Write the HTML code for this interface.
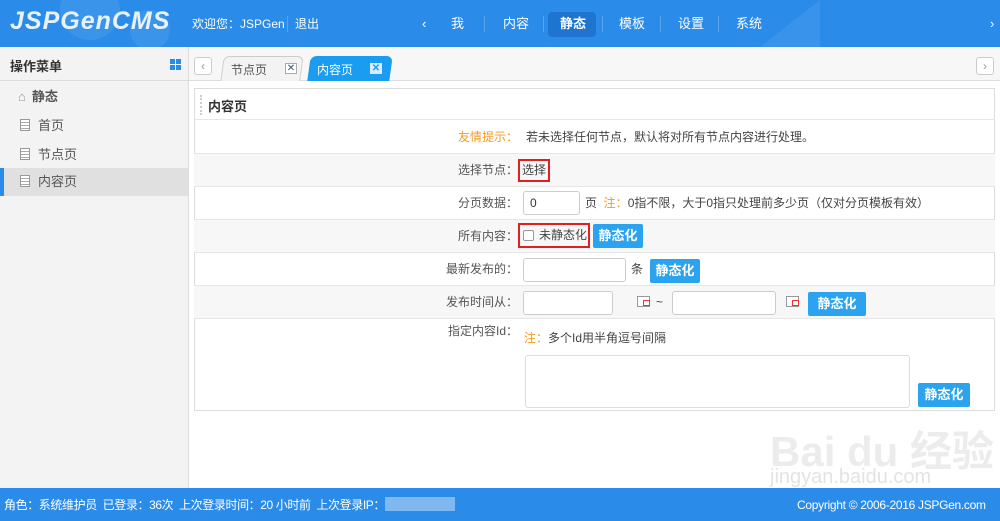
<!DOCTYPE html><html><head><meta charset="utf-8"><style>
*{margin:0;padding:0;box-sizing:border-box}
body{width:1000px;height:521px;position:relative;overflow:hidden;background:#fff;font-family:"Liberation Sans","Noto Sans CJK SC",sans-serif;font-size:12px;color:#444}
.a{position:absolute}
#hd{left:0;top:0;width:1000px;height:47px;background:#2a8be9;color:#fff;overflow:hidden}
.logo{left:10px;top:7px;font-size:25px;font-weight:bold;font-style:italic;color:#e8f2fb;letter-spacing:1px}
.nav{top:15px;font-size:13px;color:#fff;line-height:18px}
.sep{top:16px;width:1px;height:16px;background:#5aa4ee}
#sb{left:0;top:47px;width:189px;height:441px;background:#f3f3f3;border-right:1px solid #ddd}
.mi{left:0;width:188px;height:28px;line-height:28px;font-size:13px;color:#555}
.doc{display:inline-block;width:10px;height:12px;border:1px solid #999;margin:0 8px 0 20px;vertical-align:-1px;background:repeating-linear-gradient(#fff 0 2px,#aaa 2px 3px)}
#tb{left:189px;top:47px;width:811px;height:34px;background:#f7f7f7;border-bottom:1px solid #ddd}
.btn{background:#2ba3ee;color:#fff;font-size:13px;font-weight:bold;height:24px;line-height:24px;text-align:center;width:50px;border-radius:2px}
.in{background:#fff;border:1px solid #ccc;border-radius:3px;height:24px}
.row{left:194px;width:801px;border-top:1px solid #e6e6e6}
.lab{width:324px;text-align:right;font-size:12px;color:#555;line-height:16px}
.cal{width:13px;height:11px;border:1px solid #999;background:#fff}
.cal:after{content:"";position:absolute;left:5px;top:3px;width:5px;height:4px;border:1px solid #e33}
.or{color:#f39c20}
.t{line-height:16px}
</style></head><body>
<div id="hd" class="a">
<div class="a" style="left:60px;top:-20px;width:60px;height:60px;border-radius:50%;background:rgba(255,255,255,.08)"></div>
<div class="a" style="left:130px;top:10px;width:40px;height:40px;border-radius:50%;background:rgba(255,255,255,.08)"></div>
<div class="a" style="left:760px;top:0;width:0;height:47px;border-left:60px solid transparent;border-bottom:47px solid rgba(255,255,255,.07)"></div>
<div class="a logo">JSPGenCMS</div>
<div class="a nav" style="left:192px;font-size:12px">欢迎您：JSPGen</div>
<div class="a sep" style="left:287px"></div>
<div class="a nav" style="left:295px;font-size:12px">退出</div>
<div class="a nav" style="left:422px">‹</div>
<div class="a nav" style="left:451px">我</div>
<div class="a sep" style="left:484px"></div>
<div class="a nav" style="left:503px">内容</div>
<div class="a sep" style="left:543px"></div>
<div class="a" style="left:548px;top:12px;width:48px;height:25px;background:#1f74cf;border-radius:4px"></div>
<div class="a nav" style="left:560px;font-weight:bold">静态</div>
<div class="a sep" style="left:602px"></div>
<div class="a nav" style="left:619px">模板</div>
<div class="a sep" style="left:660px"></div>
<div class="a nav" style="left:678px">设置</div>
<div class="a sep" style="left:718px"></div>
<div class="a nav" style="left:736px">系统</div>
<div class="a nav" style="left:990px">›</div>
</div>
<div id="sb" class="a">
<div class="a" style="left:10px;top:9px;font-size:13px;font-weight:bold;color:#333">操作菜单</div>
<div class="a" style="left:170px;top:12px;width:11px;height:11px;background:linear-gradient(90deg,transparent 5px,#f3f3f3 5px 6px,transparent 6px),linear-gradient(transparent 5px,#f3f3f3 5px 6px,transparent 6px),#2a8be9"></div>
<div class="a" style="left:0;top:33px;width:188px;height:1px;background:#ddd"></div>
<div class="a mi" style="top:36px;font-weight:bold"><span style="margin:0 6px 0 18px;color:#999">&#8962;</span>静态</div>
<div class="a mi" style="top:65px"><span class="doc"></span>首页</div>
<div class="a mi" style="top:94px"><span class="doc"></span>节点页</div>
<div class="a mi" style="top:121px;background:#e0e0e0"><span class="doc"></span>内容页</div>
<div class="a" style="left:0;top:121px;width:4px;height:28px;background:#2a8be9"></div>
</div>
<div id="tb" class="a">
<div class="a" style="left:5px;top:10px;width:18px;height:18px;border:1px solid #ccc;border-radius:3px;background:#fff;color:#999;text-align:center;line-height:16px">‹</div>
<div class="a" style="left:33px;top:9px;width:80px;height:25px;border:1px solid #ccc;border-bottom:none;border-radius:6px 6px 0 0;background:#f3f3f3;transform:skewX(-8deg)"></div>
<div class="a" style="left:42px;top:14px;font-size:12px;color:#555">节点页</div>
<div class="a" style="left:96px;top:16px;width:12px;height:11px;border:1px solid #aaa;background:#fff;font-size:10px;line-height:9px;text-align:center;color:#357">✕</div>
<div class="a" style="left:120px;top:9px;width:82px;height:25px;border-radius:6px 6px 0 0;background:#1a9cf0;transform:skewX(-8deg)"></div>
<div class="a" style="left:128px;top:14px;font-size:12px;color:#fff">内容页</div>
<div class="a" style="left:181px;top:16px;width:12px;height:11px;background:#d8ecfb;font-size:10px;line-height:11px;text-align:center;color:#1a9cf0;font-weight:bold">✕</div>
<div class="a" style="left:787px;top:10px;width:18px;height:18px;border:1px solid #ccc;border-radius:3px;background:#fff;color:#999;text-align:center;line-height:16px">›</div>
</div>
<div class="a" style="left:194px;top:88px;width:801px;height:323px;border:1px solid #ddd"></div>
<div class="a" style="left:200px;top:95px;width:2px;height:20px;border-left:2px dotted #ccc"></div>
<div class="a" style="left:208px;top:96px;font-size:13px;font-weight:bold;color:#333">内容页</div>
<div class="a row" style="top:119px;height:34px"><div class="a lab" style="top:9px"><span class="or">友情提示：</span></div><div class="a t" style="left:332px;top:9px">若未选择任何节点，默认将对所有节点内容进行处理。</div></div>
<div class="a row" style="top:153px;height:33px;background:#f7f7f7"><div class="a lab" style="top:8px">选择节点：</div><div class="a" style="left:324px;top:5px;width:32px;height:23px;border:2px solid #e02020;line-height:19px;text-align:center">选择</div></div>
<div class="a row" style="top:186px;height:33px"><div class="a lab" style="top:8px">分页数据：</div><div class="a in" style="left:329px;top:4px;width:57px;padding:4px 6px;color:#333">0</div><div class="a t" style="left:391px;top:8px">页 <span class="or">&nbsp;注：</span>0指不限，大于0指只处理前多少页（仅对分页模板有效）</div></div>
<div class="a row" style="top:219px;height:33px;background:#f7f7f7"><div class="a lab" style="top:8px">所有内容：</div><div class="a" style="left:324px;top:3px;width:72px;height:25px;border:2px solid #e02020"></div><div class="a" style="left:329px;top:10px;width:11px;height:11px;border:1px solid #999;border-radius:2px;background:#fff"></div><div class="a t" style="left:345px;top:7px">未静态化</div><div class="a btn" style="left:399px;top:4px">静态化</div></div>
<div class="a row" style="top:252px;height:33px"><div class="a lab" style="top:8px">最新发布的：</div><div class="a in" style="left:329px;top:5px;width:103px"></div><div class="a t" style="left:437px;top:8px">条</div><div class="a btn" style="left:456px;top:6px">静态化</div></div>
<div class="a row" style="top:285px;height:33px;background:#f7f7f7"><div class="a lab" style="top:8px">发布时间从：</div><div class="a in" style="left:329px;top:5px;width:90px"></div><div class="a cal" style="left:443px;top:10px"></div><div class="a t" style="left:462px;top:8px">~</div><div class="a in" style="left:478px;top:5px;width:104px"></div><div class="a cal" style="left:592px;top:10px"></div><div class="a btn" style="left:614px;top:6px;width:58px">静态化</div></div>
<div class="a row" style="top:318px;height:92px"><div class="a lab" style="top:4px">指定内容Id：</div><div class="a t" style="left:330px;top:11px"><span class="or">注：</span>多个Id用半角逗号间隔</div><div class="a in" style="left:331px;top:36px;width:385px;height:53px;border-color:#ddd"></div><div class="a btn" style="left:724px;top:64px;width:52px">静态化</div></div>
<div class="a" style="left:0;top:488px;width:1000px;height:33px;background:#2a8be9;color:#fff;font-size:12px">
<div class="a t" style="left:4px;top:9px;letter-spacing:-0.4px">角色：系统维护员&nbsp; 已登录：36次&nbsp; 上次登录时间：20 小时前&nbsp; 上次登录IP：</div>
<div class="a" style="left:385px;top:9px;width:70px;height:14px;background:#7fb8f0"></div>
<div class="a t" style="left:797px;top:9px;letter-spacing:-0.3px">Copyright © 2006-2016 JSPGen.com</div>
</div>
<div class="a" style="left:770px;top:418px;font-size:42px;font-weight:bold;color:rgba(200,200,200,.35);white-space:nowrap">Bai du 经验</div>
<div class="a" style="left:770px;top:466px;font-size:20px;color:rgba(200,200,200,.5);white-space:nowrap">jingyan.baidu.com</div>
</body></html>
